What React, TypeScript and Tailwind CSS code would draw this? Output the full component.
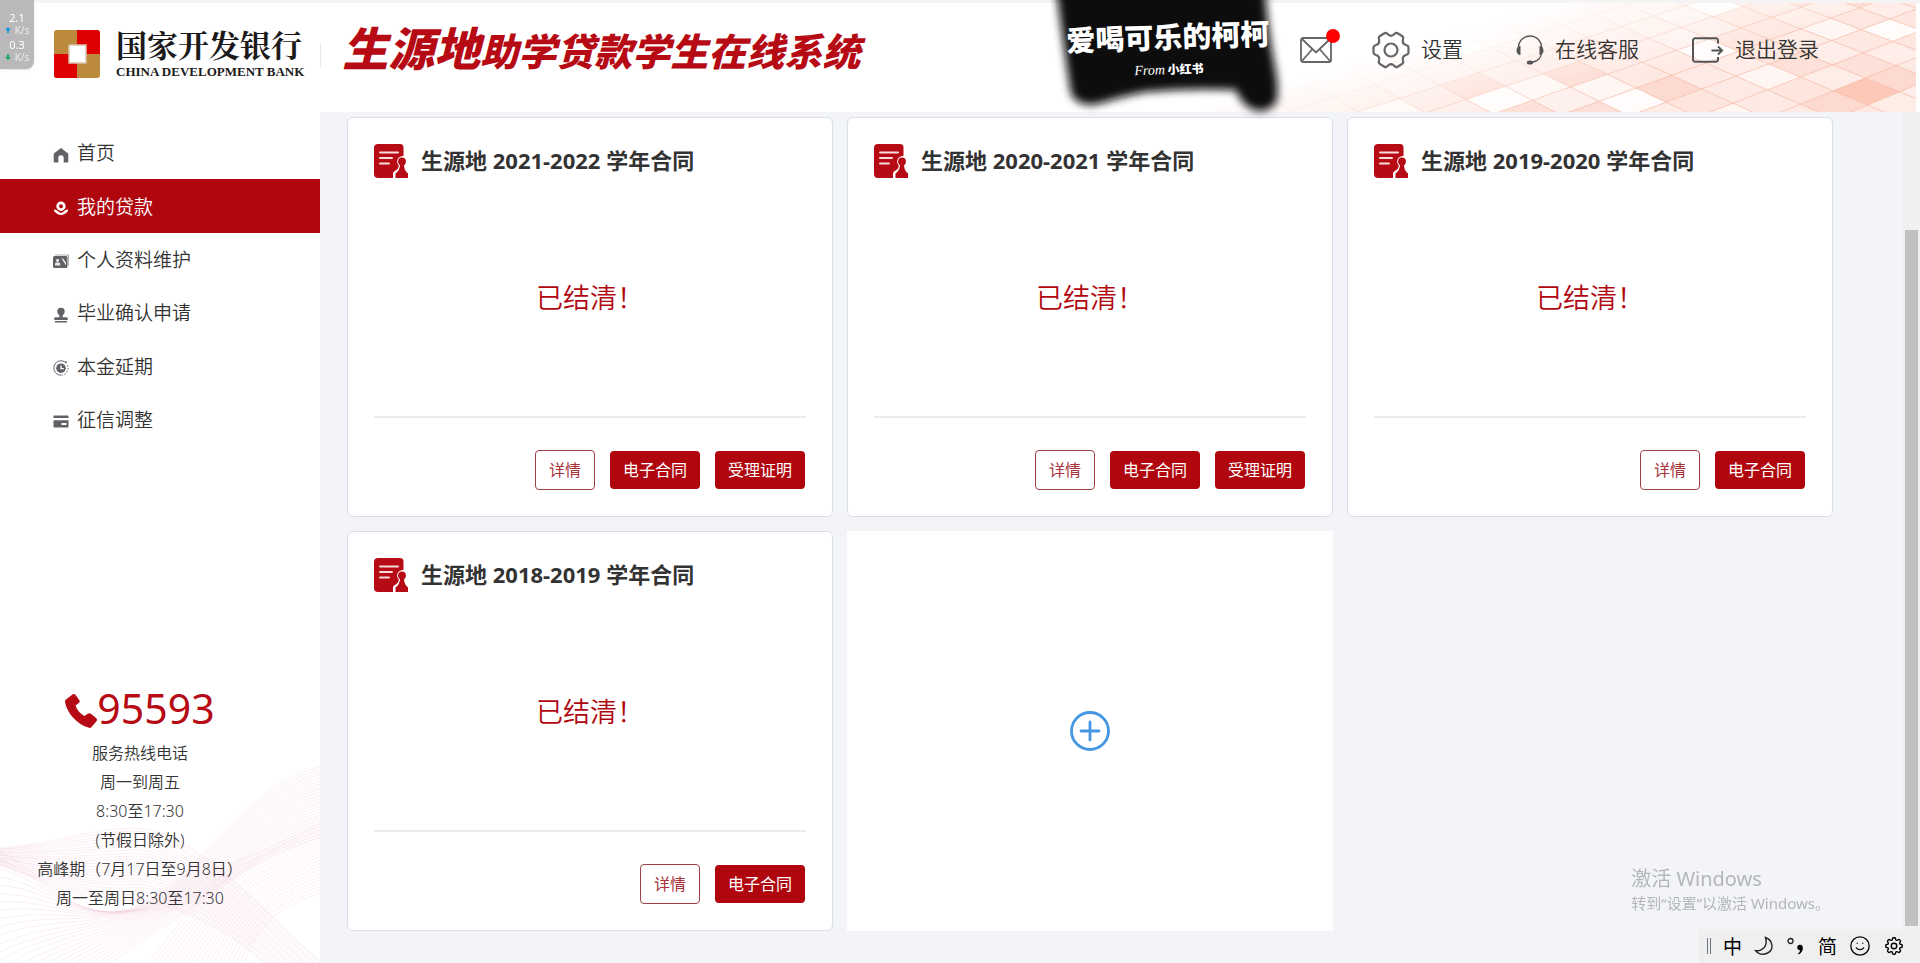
import React from "react";
import { Smile } from "lucide-react";
import { HiOutlineCog8Tooth } from "react-icons/hi2";

const SANS = "font-['Noto_Sans','Noto_Sans_CJK_SC',sans-serif]";

interface Contract {
  year: string;
  actions: string[];
}

const contracts: Contract[] = [
  { year: "2021-2022", actions: ["电子合同", "受理证明"] },
  { year: "2020-2021", actions: ["电子合同", "受理证明"] },
  { year: "2019-2020", actions: ["电子合同"] },
  { year: "2018-2019", actions: ["电子合同"] },
];

const HomeIcon = () => (
  <svg viewBox="0 0 16 16" className="w-4 h-4" fill="currentColor">
    <path d="M8 1 1.2 6.2A1.5 1.5 0 0 0 .7 7.4V14.500c0 .6.4 1 1 1h3.600V11a2.700 2.700 0 0 1 5.400 0v4.500h3.600c.6 0 1-.4 1-1V7.400c0-.5-.2-.9-.5-1.200z" />
  </svg>
);

const LoanIcon = () => (
  <svg viewBox="0 0 16 16" className="w-4 h-4" fill="currentColor">
    <path fillRule="evenodd" d="M8 1.500a4.700 4.700 0 1 1 0 9.400 4.700 4.700 0 0 1 0-9.400zm0 2.700a2 2 0 1 0 0 4 2 2 0 0 0 0-4z" />
    <path d="M1 9.500c2 .2 3.600 1 4.800 2.400L8 13l2.200-1.100C11.400 10.500 13 9.700 15 9.500v1.600c-2.300 2.600-4.700 3.900-7 3.900s-4.700-1.300-7-3.900z" />
  </svg>
);

const ProfileIcon = () => (
  <svg viewBox="0 0 16 16" className="w-4 h-4" fill="currentColor">
    <path d="M3 1.500h12a1 1 0 0 1 1 1v10h-1V4a1.500 1.500 0 0 0-1.500-1.500H2a1 1 0 0 1 1-1z" opacity=".5" />
    <rect x="0" y="3" width="14.500" height="12" rx="1.500" />
    <circle cx="4.600" cy="7.400" r="1.400" fill="#fff" />
    <path d="M2 12.500V11c0-1.100.9-1.800 2.600-1.800s2.600.7 2.600 1.800v1.500zM8.500 5.500h1.500l3 4v3z" fill="#fff" opacity=".85" />
  </svg>
);

const StampIcon = () => (
  <svg viewBox="0 0 16 16" className="w-4 h-4" fill="currentColor">
    <circle cx="8" cy="4.500" r="3.700" />
    <path d="M6.300 7h3.400v3.200H14a.7.7 0 0 1 .7.7V13H1.300v-2.100a.7.7 0 0 1 .7-.7h4.300zM2 14h12v1.500H2z" />
  </svg>
);

const ExtendIcon = () => (
  <svg viewBox="0 0 16 16" className="w-4 h-4" fill="none" stroke="currentColor">
    <path d="M12.800 2.600A7.200 7.200 0 1 0 8.500 15.200" />
    <path d="M14.500 5.200a7.200 7.200 0 0 1-5.200 9.900" strokeDasharray="1.500 1.500" />
    <circle cx="8" cy="8.200" r="4.800" fill="currentColor" stroke="none" />
    <path d="M8 5.500v3.200h2.800" stroke="#fff" strokeWidth="1.300" />
    <path d="M12 1.200l2.500.6-1.600 2z" fill="currentColor" stroke="none" />
  </svg>
);

const CreditIcon = () => (
  <svg viewBox="0 0 16 16" className="w-4 h-4" fill="currentColor">
    <path d="M1.500 2.500h13c.6 0 1 .4 1 1V5H.5V3.500c0-.6.4-1 1-1z" />
    <path fillRule="evenodd" d="M.5 7.200h15v6.300c0 .6-.4 1-1 1h-13c-.6 0-1-.4-1-1zM8.500 10v2h5v-2z" />
  </svg>
);

const menu = [
  { label: "首页", icon: <HomeIcon /> },
  { label: "我的贷款", icon: <LoanIcon />, active: true },
  { label: "个人资料维护", icon: <ProfileIcon /> },
  { label: "毕业确认申请", icon: <StampIcon /> },
  { label: "本金延期", icon: <ExtendIcon /> },
  { label: "征信调整", icon: <CreditIcon /> },
];

const ContractIcon = () => (
  <svg viewBox="0 0 34 34" className="w-[34px] h-[34px] shrink-0">
    <path d="M4 0h22a3.500 3.500 0 0 1 3.500 3.500V12c-4 0-6.300 2.400-6.300 5.600 0 1.700.6 3 1.600 4-.2 2.700-1.400 4.400-4 5.400-1.200.6-1.800 1.500-1.800 3V34H4a4 4 0 0 1-4-4V4a4 4 0 0 1 4-4z" fill="#b60a14" />
    <path d="M6 8.500h18M6 14h12M6 19.500h9" stroke="#f8dcdc" strokeWidth="2" strokeLinecap="round" />
    <circle cx="28" cy="17.500" r="3.900" fill="#b60a14" />
    <path d="M26 20h4c0 4 .8 7 4 9.500V34H21.500v-4.500C25 27 26 24 26 20z" fill="#b60a14" />
  </svg>
);

const GearIcon = () => (
  <svg viewBox="0 0 38 38" className="w-[38px] h-[38px]" fill="none" stroke="#666" strokeWidth="2.200">
    <path
      d="M12 2.500q2-1.500 3.500.5 3.500 3.500 7 0 1.500-2 3.500-.5l4 2.500q1.800 1.200 1 3.200-1.200 4.800 3.500 6 2 .5 2 2.500v4.600q0 2-2 2.500-4.700 1.200-3.500 6 .8 2-1 3.200l-4 2.500q-2 1.500-3.500-.5-3.500-3.500-7 0-1.500 2-3.500.5l-4-2.500q-1.800-1.200-1-3.200 1.200-4.800-3.500-6-2-.5-2-2.500v-4.600q0-2 2-2.500 4.700-1.200 3.500-6-.8-2 1-3.200z"
      strokeLinejoin="round"
    />
    <circle cx="19" cy="19" r="6.500" />
  </svg>
);

const HeadsetIcon = () => (
  <svg viewBox="0 0 28 30" className="w-7 h-[30px]" fill="none" stroke="#555" strokeWidth="1.400">
    <path d="M2.500 14V12.500a11.500 11.500 0 0 1 23 0V17c0 5.500-3.500 9.300-9 10" />
    <path d="M4.500 11v9C2 20 .5 18.200.5 15.500S2 11 4.500 11zM23.500 11v9c2.500 0 4-1.800 4-4.500S26 11 23.500 11z" fill="#555" stroke="none" />
    <ellipse cx="14" cy="27.500" rx="3.200" ry="2" fill="#555" stroke="none" />
  </svg>
);

const LogoutIcon = () => (
  <svg viewBox="0 0 32 26" className="w-8 h-[26px]" fill="none" stroke="#555" strokeWidth="2">
    <path d="M26 6.500V3.500A2.200 2.200 0 0 0 23.800 1.200H3.200A2.200 2.200 0 0 0 1 3.500v19a2.200 2.200 0 0 0 2.200 2.300h20.600a2.200 2.200 0 0 0 2.200-2.300V20" />
    <path d="M19.500 13.500H30M26 9.500l4.200 4-4.200 4" strokeWidth="1.800" />
  </svg>
);

// Perspective tile floor behind the header links
const project = (i: number, j: number) => {
  const x = 643 + i * 29 + j * 39;
  const up = 25 - i * 15 + j * 14;
  const w = 1 + up * 0.0014;
  return [360 + (x - 360) / w, 112 - up / w];
};

const shades = [0.04, 0.32, 0.24, 0.42, 0.12, 0.28, 0.34, 0.26, 0.5, 0.2, 0.3];

const tiles: { points: string; shade: number }[] = [];
for (let i = -22; i < 18; i++) {
  for (let j = -22; j < 18; j++) {
    const corners = [project(i, j), project(i, j + 1), project(i + 1, j + 1), project(i + 1, j)];
    if (corners.every(([x, y]) => x < -40 || x > 760 || y < -20 || y > 140)) continue;
    const hash = Math.abs((i * 73 + j * 151 + i * j * 31) % 11);
    const shade = i === 0 && j === 0 ? 0.75 : shades[hash];
    tiles.push({ points: corners.map(([x, y]) => `${x.toFixed(1)},${y.toFixed(1)}`).join(" "), shade });
  }
}

const HeaderPattern = () => (
  <svg viewBox="0 0 716 109" className="absolute right-1 bottom-0 w-[716px] h-[109px]" aria-hidden="true">
    <defs>
      <linearGradient id="fade" gradientUnits="userSpaceOnUse" x1="60" y1="85" x2="88" y2="180">
        <stop offset="0" stopColor="#fff" stopOpacity="0" />
        <stop offset="1" stopColor="#fff" />
      </linearGradient>
      <mask id="fadeMask">
        <rect width="716" height="109" fill="url(#fade)" />
      </mask>
    </defs>
    <g mask="url(#fadeMask)">
      {tiles.map((t) => (
        <polygon key={t.points} points={t.points} fill="#fbb59f" fillOpacity={t.shade} stroke="#f6b9a3" strokeOpacity="0.4" />
      ))}
    </g>
  </svg>
);

// Bundles of thin curves, interpolated between two edge curves
const bundles = [
  {
    from: [0, 88, 50, 85, 90, 68, 135, 68, 200, 70, 270, 160, 330, 210],
    to: [0, 105, 50, 125, 90, 145, 140, 140, 200, 150, 260, 190, 300, 240],
    count: 24,
  },
  {
    from: [0, 92, 40, 110, 60, 150, 110, 152, 190, 150, 230, 20, 330, 5],
    to: [0, 300, 60, 230, 130, 190, 190, 150, 230, 120, 270, 90, 330, 75],
    count: 26,
  },
  {
    from: [120, 240, 160, 190, 200, 130, 240, 100, 270, 90, 300, 70, 330, 60],
    to: [230, 240, 240, 210, 255, 170, 275, 155, 290, 145, 310, 135, 330, 130],
    count: 22,
  },
];

const waves = bundles.flatMap(({ from, to, count }) =>
  Array.from({ length: count }, (_, k) => {
    const p = from.map((v, n) => Math.round(v + ((to[n] - v) * k) / (count - 1)));
    return `M${p[0]} ${p[1]}C${p.slice(2, 8).join(" ")}C${p.slice(8).join(" ")}`;
  })
);

const SidebarWaves = () => (
  <svg
    viewBox="0 0 320 203"
    preserveAspectRatio="none"
    className="absolute left-0 bottom-0 w-full h-[203px]"
    aria-hidden="true"
    fill="none"
    stroke="#eba6c4"
    strokeOpacity="0.18"
    strokeWidth="1"
  >
    {waves.map((d, n) => (
      <path key={n} d={d} />
    ))}
  </svg>
);

const Header = () => (
  <header className="relative flex items-start h-28 bg-white border-t-3 border-[#f4f4f5]">
    <HeaderPattern />
    <div className="flex items-start gap-4 pl-[54px] pt-[25px]">
      <svg viewBox="0 0 46 48" className="w-[46px] h-12 mt-0.5" aria-label="国家开发银行">
        <rect width="46" height="48" rx="3" fill="#bc8a3d" />
        <path d="M23 0h20a3 3 0 0 1 3 3v21H23zM0 24h23v24H3a3 3 0 0 1-3-3z" fill="#de0000" />
        <rect x="15" y="15" width="17" height="18" fill="#fff" stroke="#d9c4ac" strokeWidth="1.500" />
      </svg>
      <div className="text-[#1c1a1a] whitespace-nowrap">
        <p className="font-['Noto_Serif_CJK_SC','Noto_Sans_CJK_SC',serif] font-bold text-[31px] leading-8">国家开发银行</p>
        <p className="pt-1 font-['Liberation_Serif',serif] font-bold text-[13px] leading-4">CHINA DEVELOPMENT BANK</p>
      </div>
    </div>
    <div className="w-px h-6 mt-10 ml-4 bg-gray-200" />
    <h1 className="flex items-baseline ml-[21px] pt-[18px] font-['Noto_Sans_CJK_SC',sans-serif] font-black italic text-[#b60a14] whitespace-nowrap leading-[50px]">
      <span className="text-[46px]">生源地</span>
      <span className="text-[38px]">助学贷款学生在线系统</span>
    </h1>

    <nav className={`relative flex items-center gap-[53px] ml-auto pr-[101px] h-[94px] text-[21px] font-[350] text-[#333] whitespace-nowrap ${SANS}`}>
      <div className="flex items-center gap-10">
        <a href="#messages" aria-label="消息" className="relative">
          <svg viewBox="0 0 32 26" className="w-8 h-[26px]" fill="none" stroke="#666" strokeWidth="1.800">
            <rect x="1" y="1" width="30" height="24" rx="2" />
            <path d="M2 2l14 13.500L30 2M2 24l10-11.500M30 24L20 12.500" />
          </svg>
          <span className="absolute -top-2 -right-2 w-3.5 h-3.5 rounded-full bg-[#ff0000]" />
        </a>
        <a href="#settings" className="flex items-center gap-[11px]">
          <GearIcon />
          设置
        </a>
      </div>
      <a href="#service" className="flex items-center gap-[11px]">
        <HeadsetIcon />
        在线客服
      </a>
      <a href="#logout" className="flex items-center gap-[11px]">
        <LogoutIcon />
        退出登录
      </a>
    </nav>
  </header>
);

const Sidebar = () => (
  <aside className={`relative flex flex-col w-80 shrink-0 bg-white pt-3.5 ${SANS}`}>
    <SidebarWaves />
    <nav className="relative grid grid-rows-6 h-[320px]">
      {menu.map((item) => (
        <a
          key={item.label}
          href="#menu"
          className={`flex items-center gap-2 pt-0.5 pl-[53px] text-[19px] font-[350] ${
            item.active ? "bg-[#b0070f] text-white" : "text-[#333]"
          }`}
        >
          <span className={item.active ? "pt-0.5 text-white" : "pt-0.5 text-[#606266]"}>{item.icon}</span>
          {item.label}
        </a>
      ))}
    </nav>
    <div className="relative mt-auto w-[280px] pb-[50px] text-center text-base leading-[29px] font-[350] text-[#333] whitespace-nowrap">
      <p className="flex items-center justify-center text-[#b60a14] text-[41px] leading-[62px] font-normal">
        <svg viewBox="0 0 32 34" className="w-8 h-[34px] mt-1.5" fill="#b60a14">
          <path d="M1 5.500 7.500.5c1-.7 2.300-.5 3.100.5l3.600 5c.7 1 .6 2.300-.4 3.100L10.500 11.500c1.500 4.500 4.500 8 9 10.500l3.300-2.300c1-.8 2.200-.7 3.100.1l5.200 4.200c1 .8 1.100 2.200.4 3.200L26.500 33c-.6.8-1.600 1.100-2.500.8C12 30.500 2 19 0 8c-.1-1 .2-1.900 1-2.500z" />
        </svg>
        95593
      </p>
      <p>服务热线电话</p>
      <p>周一到周五</p>
      <p>8:30至17:30</p>
      <p>(节假日除外)</p>
      <p>高峰期（7月17日至9月8日）</p>
      <p>周一至周日8:30至17:30</p>
    </div>
  </aside>
);

const ContractCard = ({ year, actions }: Contract) => (
  <article className="flex flex-col min-h-[400px] p-[26px] bg-white border border-[#d9dcea] rounded-md">
    <header className="flex items-start gap-[13px]">
      <ContractIcon />
      <h2 className="text-[22px] leading-8 font-bold text-[#333]">生源地 {year} 学年合同</h2>
    </header>
    <p className="flex flex-1 items-center justify-center pt-0.5 text-[27px] font-[350] text-[#b0070f]">已结清！</p>
    <footer className="flex items-center justify-end gap-[15px] pt-8 pr-px border-t-2 border-[#e9eaec]">
      <button className="w-[60px] h-10 rounded border border-[#a04048] bg-white text-base text-[#a8323a]">详情</button>
      {actions.map((action) => (
        <button key={action} className="w-[90px] h-[38px] rounded bg-[#b0070f] text-base text-white">
          {action}
        </button>
      ))}
    </footer>
  </article>
);

const SpeedRow = ({ value, up }: { value: string; up?: boolean }) => (
  <div>
    <p className="text-[11px]">{value}</p>
    <p className="flex items-center justify-center gap-1 text-[10px] text-[#ececec]">
      <svg viewBox="0 0 8 8" className="w-1.5 h-2" fill={up ? "#1296db" : "#13a860"}>
        <path d={up ? "M4 0 8 4H5.200V8H2.800V4H0z" : "M4 8 8 4H5.200V0H2.800V4H0z"} />
      </svg>
      K/s
    </p>
  </div>
);

const NetSpeed = () => (
  <div className="fixed left-0 top-0 flex flex-col gap-[3px] w-[34px] h-[69px] pt-3 rounded-br-lg bg-[#b9b9bb] shadow text-white text-center leading-3 font-['Noto_Sans',sans-serif]">
    <SpeedRow value="2.1" up />
    <SpeedRow value="0.3" />
  </div>
);

const Sticker = () => (
  <div className="absolute left-[1050px] top-0 w-[240px] h-[120px] text-white text-center whitespace-nowrap">
    <svg viewBox="0 0 240 120" className="absolute inset-0 w-full h-full overflow-hidden" aria-hidden="true">
      <defs>
        <filter id="soft" x="-20%" y="-20%" width="140%" height="140%">
          <feGaussianBlur stdDeviation="4.500" />
        </filter>
      </defs>
      <path
        d="M5-20 H214 Q218 30 224 62 Q230 90 226 103 Q214 116 200 108 Q190 102 186 90 Q140 88 95 92 Q70 97 55 102 Q30 110 21 94 Q14 50 5-20z"
        fill="#0b0b0b"
        filter="url(#soft)"
      />
    </svg>
    <div className="relative -rotate-2 pt-2.5 pr-1 font-['Noto_Sans_CJK_SC',sans-serif] font-black">
      <p className="text-[29px] leading-[50px]">爱喝可乐的柯柯</p>
      <p className="text-xs leading-3"><span className="font-['Liberation_Serif',serif] font-normal italic text-sm">From</span> 小红书</p>
    </div>
  </div>
);

const ActivationNotice = () => (
  <div className={`fixed right-[90px] bottom-[50px] text-[#b4b6b8] whitespace-nowrap ${SANS}`}>
    <p className="text-xl leading-7">激活 Windows</p>
    <p className="text-[15px] leading-5">转到“设置”以激活 Windows。</p>
  </div>
);

const InputBar = () => (
  <div className="fixed right-[7px] bottom-0 flex items-center gap-3 h-[34px] px-2 bg-[#efeff0] text-black text-[19px] font-['Noto_Sans_CJK_SC',sans-serif]">
    <span className="w-1 h-4 border-x border-gray-500" />
    <span>中</span>
    <svg viewBox="0 0 20 20" className="w-5 h-5" fill="none" stroke="#222" strokeWidth="1.400">
      <path d="M11.500 1.500c8 3 9 13 1 16-4.500 1.600-9 .2-11-2.800C9 15.500 14 9.500 11.500 1.500z" />
    </svg>
    <svg viewBox="0 0 20 20" className="w-5 h-5">
      <circle cx="4.500" cy="5" r="2.500" fill="none" stroke="#222" strokeWidth="1.300" />
      <circle cx="14" cy="11.500" r="2.700" />
      <path d="M16.700 11.500c.3 3-1 5.500-4.200 7l-.5-1c1.500-1 2.300-2.200 2-4z" />
    </svg>
    <span>简</span>
    <Smile className="w-[22px] h-[22px]" strokeWidth={1.4} />
    <HiOutlineCog8Tooth className="w-[22px] h-[22px]" />
  </div>
);

export default function App() {
  return (
    <div className="relative flex flex-col min-h-screen bg-[#f2f4f7]">
      <Header />
      <div className="flex flex-1">
        <Sidebar />
        <main className={`grid flex-1 grid-cols-3 content-start gap-3.5 pt-[5px] pb-8 pl-[27px] pr-[70px] ${SANS}`}>
          {contracts.map((contract) => (
            <ContractCard key={contract.year} {...contract} />
          ))}
          <button aria-label="新增合同" className="flex items-center justify-center min-h-[400px] bg-white">
            <svg viewBox="0 0 40 40" className="w-10 h-10" fill="none" stroke="#4596e3" strokeWidth="2.800">
              <circle cx="20" cy="20" r="18.500" />
              <path d="M20 11v18M11 20h18" strokeLinecap="round" />
            </svg>
          </button>
        </main>
        <div className="w-[17px] shrink-0 px-0.5 pt-[118px] pb-[37px] bg-[#f0f0f1]" aria-hidden="true">
          <div className="h-full bg-[#c1c1c1]" />
        </div>
      </div>
      <Sticker />
      <NetSpeed />
      <ActivationNotice />
      <InputBar />
    </div>
  );
}
